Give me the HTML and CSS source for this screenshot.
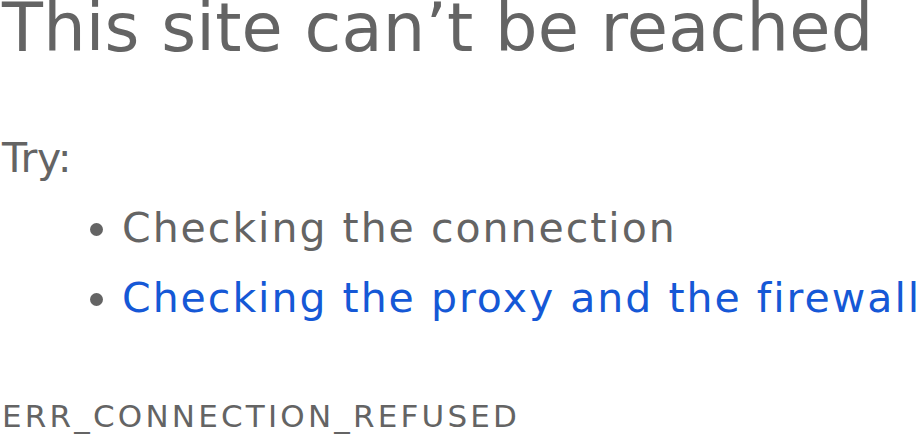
FILE: index.html
```html
<!DOCTYPE html>
<html lang="en">
<head>
<meta charset="utf-8">
<title>This site can’t be reached</title>
<link rel="stylesheet" href="styles.css">
</head>
<body>
<main class="page">
  <h1 class="headline">This site can’t be reached</h1>
  <p class="try">Try:</p>
  <ul class="suggestions">
    <li>Checking the connection</li>
    <li><a class="link" href="#">Checking the proxy and the firewall</a></li>
  </ul>
  <div class="error-code">ERR_CONNECTION_REFUSED</div>
</main>
</body>
</html>
```

FILE: styles.css
```css
html, body {
  margin: 0;
  padding: 0;
  background: #ffffff;
}

body {
  font-family: "DejaVu Sans", sans-serif;
  color: #646464;
  overflow: hidden;
}

.page {
  padding-left: 2px;
}

.headline {
  margin: 0;
  font-size: 67px;
  font-weight: normal;
  line-height: 56px;
  letter-spacing: 0.2px;
  white-space: nowrap;
}

.try {
  margin: 67px 0 0;
  font-size: 41px;
  line-height: 70px;
  letter-spacing: -0.5px;
}

.suggestions {
  margin: 0;
  padding-left: 120px;
  font-size: 41px;
  line-height: 70px;
  letter-spacing: 2px;
  white-space: nowrap;
}

.suggestions li::marker {
  letter-spacing: 0;
}

.link {
  color: #1558d6;
  text-decoration: none;
}

.error-code {
  margin-top: 63px;
  font-size: 31px;
  line-height: 40px;
  letter-spacing: 3.2px;
}
```
